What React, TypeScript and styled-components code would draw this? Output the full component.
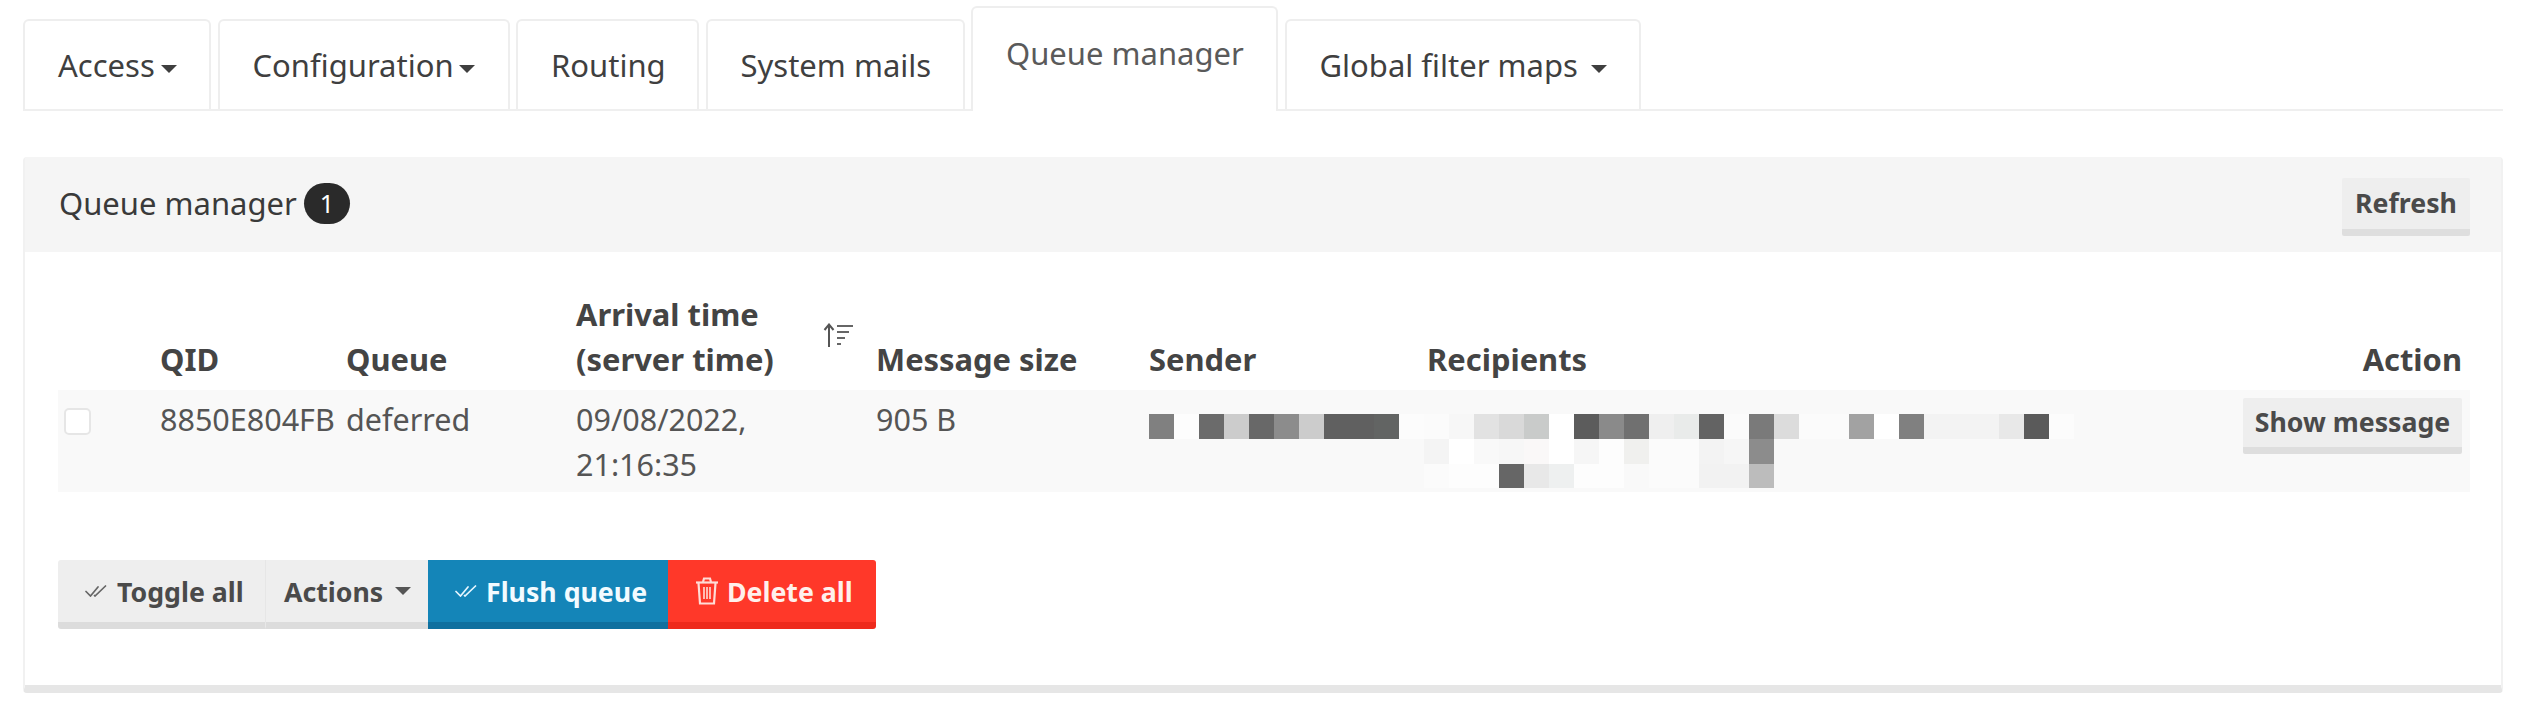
import React from "react";
import styled, { createGlobalStyle } from "styled-components";

const Global = createGlobalStyle`
  html, body { margin: 0; padding: 0; background: #fff; }
  body { font-family: "Noto Sans", "Open Sans", sans-serif; color: #444; }
`;

const Page = styled.div`
  width: 2526px;
  height: 714px;
  box-sizing: border-box;
  padding: 7px 23px 0 23px;
  overflow: hidden;
`;

const TabBar = styled.nav`
  display: flex;
  align-items: flex-end;
  height: 104px;
  border-bottom: 2px solid #efefef;
  box-sizing: border-box;
  margin-bottom: 46px;
`;

const Tab = styled.div<{ $w: number; $active?: boolean }>`
  width: ${(p) => p.$w}px;
  box-sizing: border-box;
  flex: none;
  height: ${(p) => (p.$active ? 105 : 90)}px;
  margin-right: 6.5px;
  margin-bottom: ${(p) => (p.$active ? -2 : 0)}px;
  padding: ${(p) => (p.$active ? "23px 0 0 33px" : "22px 0 0 33px")};
  border: 2px solid #eeeeee;
  border-bottom: 0;
  border-radius: 6px 6px 0 0;
  background: #fff;
  font-size: 31px;
  line-height: 45px;
  white-space: nowrap;
  color: ${(p) => (p.$active ? "#5a5a5a" : "#3f3f3f")};
`;

const Caret = styled.span<{ $gap?: number; $color?: string }>`
  display: inline-block;
  vertical-align: middle;
  margin-left: ${(p) => p.$gap ?? 5}px;
  border-left: 8px solid transparent;
  border-right: 8px solid transparent;
  border-top: 8px solid ${(p) => p.$color ?? "#3f3f3f"};
`;

const Panel = styled.section`
  width: 2480px;
  height: 536px;
  box-sizing: border-box;
  border-left: 2px solid #f1f1f1;
  border-right: 2px solid #f1f1f1;
  border-bottom: 8px solid #e6e6e6;
  border-radius: 4px;
  background: #fff;
`;

const PanelHead = styled.header`
  height: 95px;
  box-sizing: border-box;
  background: #f5f5f5;
  padding: 21px 31px 0 34px;
  display: flex;
  align-items: flex-start;
  justify-content: space-between;
`;

const Title = styled.div`
  display: flex;
  align-items: center;
  height: 50px;
  font-size: 31px;
  color: #3a3a3a;
  white-space: nowrap;
`;

const Badge = styled.span`
  display: inline-flex;
  align-items: center;
  justify-content: center;
  margin-left: 7px;
  width: 46px;
  height: 41px;
  border-radius: 21px;
  background: #2a2a2a;
  color: #fff;
  font-size: 25px;
  font-weight: 400;
`;

const FlatButton = styled.button`
  box-sizing: border-box;
  border: 0;
  border-bottom: 7px solid #dedede;
  border-radius: 2px;
  background: #eeeeee;
  color: #4a4a4a;
  font-family: inherit;
  font-weight: 700;
  font-size: 26.7px;
  line-height: 1;
  padding: 0;
  white-space: nowrap;
`;

const RefreshButton = styled(FlatButton)`
  width: 128px;
  height: 58px;
`;

const ShowButton = styled(FlatButton)`
  width: 219px;
  height: 56px;
`;

const Body = styled.div`
  padding: 40px 31px 0 33px;
`;

const cols = "102px 186px 230px 300px 273px 278px 1fr 240px";

const HeadRow = styled.div`
  display: grid;
  grid-template-columns: ${cols};
  height: 98px;
  align-items: end;
  padding-bottom: 11px;
  box-sizing: border-box;
`;

const HeadCell = styled.div<{ $right?: boolean }>`
  font-size: 30.9px;
  font-weight: 700;
  line-height: 45px;
  color: #444;
  white-space: nowrap;
  text-align: ${(p) => (p.$right ? "right" : "left")};
  padding-right: ${(p) => (p.$right ? "8px" : "0")};
  position: relative;
`;

const SortIcon = styled.svg`
  position: absolute;
  left: 247px;
  top: 31px;
  width: 30px;
  height: 24px;
`;

const DataRow = styled.div`
  display: grid;
  grid-template-columns: ${cols};
  height: 102px;
  background: #f9f9f9;
  align-items: start;
`;

const DataCell = styled.div`
  font-size: 30.5px;
  line-height: 45px;
  padding-top: 7px;
  color: #555;
  white-space: nowrap;
`;

const Check = styled.span`
  display: block;
  box-sizing: border-box;
  width: 27px;
  height: 27px;
  margin: 18px 0 0 6px;
  border: 2px solid #e6e6e6;
  border-radius: 5px;
  background: #fff;
`;

const Redacted = styled.svg`
  grid-column: 6 / span 2;
  display: block;
  margin-top: 24px;
  width: 925px;
  height: 74px;
`;

const ActionCell = styled.div`
  display: flex;
  justify-content: flex-end;
  padding: 8px 8px 0 0;
`;

const ButtonGroup = styled.div`
  display: flex;
  margin-top: 68px;
  height: 69px;
`;

const ActionButton = styled.button<{ $w: number; $bg: string; $edge: string; $fg: string; $pad: number; $divider?: boolean }>`
  width: ${(p) => p.$w}px;
  box-sizing: border-box;
  display: flex;
  align-items: center;
  border: 0;
  border-bottom: 7px solid ${(p) => p.$edge};
  border-right: ${(p) => (p.$divider ? "1px solid #e6e6e6" : "0")};
  background: ${(p) => p.$bg};
  color: ${(p) => p.$fg};
  font-family: inherit;
  font-weight: 700;
  font-size: 26.7px;
  padding: 0 0 0 ${(p) => p.$pad}px;
  white-space: nowrap;
  &:last-child { border-radius: 0 3px 3px 0; }
  &:first-child { border-radius: 3px 0 0 3px; }
`;

const IconSlot = styled.span<{ $w: number }>`
  display: inline-flex;
  width: ${(p) => p.$w}px;
  flex: none;
`;

const DoubleCheck = ({ color }: { color: string }) => (
  <svg width="22" height="12" viewBox="0 0 22 12" fill="none" stroke={color} strokeWidth="1.7" strokeLinecap="round">
    <path d="M1 6.5 L5.5 11 L13 2" />
    <path d="M9.5 10.5 L10 11 L20.5 1" />
  </svg>
);

const TrashIcon = () => (
  <svg width="24" height="28" viewBox="0 0 24 28" fill="none" stroke="#ffdcd6" strokeWidth="2.2">
    <path d="M1 5.5 H23" />
    <path d="M8 5 L9 1.5 H15 L16 5" />
    <path d="M3.5 6 L5 26.5 H19 L20.5 6" />
    <path d="M9 10 V22 M12 10 V22 M15 10 V22" strokeWidth="1.6" />
  </svg>
);

const rows: string[][] = [
  ["#808080","#fdfdfd","#6b6b6b","#cccccc","#686868","#8c8c8c","#cccccc","#606060","#606060","#626463","#fcfcfc","#fbfbfb","#f7f7f7","#e2e2e2","#d9d9d9","#c9cbca","#ffffff","#5c5c5c","#8a8a8a","#707070","#efefef","#e9ebea","#636363","#fbfbfb","#7a7a7a","#dcdcdc","#fbfbfb","#fbfbfb","#a2a2a2","#ffffff","#808080","#f3f3f3","#f3f3f3","#f3f3f3","#e8e8e8","#5a5a5a","#fcfcfc"],
  ["#f9f9f9","#f9f9f9","#f9f9f9","#f9f9f9","#f9f9f9","#f9f9f9","#f9f9f9","#f9f9f9","#f9f9f9","#f9f9f9","#f9f9f9","#f4f4f4","#ffffff","#f9f9f9","#f7f7f7","#faf8f8","#ffffff","#f6f6f6","#fdfdfd","#f0f0ee","#fbfbfb","#fbfbfb","#f3f3f3","#f6f6f6","#8c8c8c","#f9f9f9","#f9f9f9","#f9f9f9","#f9f9f9","#f9f9f9","#f9f9f9","#f9f9f9","#f9f9f9","#f9f9f9","#f9f9f9","#f9f9f9","#f9f9f9"],
  ["#f9f9f9","#f9f9f9","#f9f9f9","#f9f9f9","#f9f9f9","#f9f9f9","#f9f9f9","#f9f9f9","#f9f9f9","#f9f9f9","#f9f9f9","#fbfbfb","#fdfdfd","#fdfdfd","#666666","#e8e8e8","#eef0f0","#fdfdfd","#fdfdfd","#f9f9f9","#fbfbfb","#fbfbfb","#f2f2f2","#f2f2f2","#bcbcbc","#f9f9f9","#f9f9f9","#f9f9f9","#f9f9f9","#f9f9f9","#f9f9f9","#f9f9f9","#f9f9f9","#f9f9f9","#f9f9f9","#f9f9f9","#f9f9f9"],
];

const tabs = [
  { label: "Access", w: 188, caret: 6 },
  { label: "Configuration", w: 292, caret: 5 },
  { label: "Routing", w: 183 },
  { label: "System mails", w: 259 },
  { label: "Queue manager", w: 307, active: true },
  { label: "Global filter maps", w: 356, caret: 13 },
];

export default function App() {
  return (
    <Page>
      <Global />
      <TabBar>
        {tabs.map((t) => (
          <Tab key={t.label} $w={t.w} $active={t.active}>
            {t.label}
            {t.caret !== undefined && <Caret $gap={t.caret} />}
          </Tab>
        ))}
      </TabBar>
      <Panel>
        <PanelHead>
          <Title>
            Queue manager<Badge>1</Badge>
          </Title>
          <RefreshButton>Refresh</RefreshButton>
        </PanelHead>
        <Body>
          <HeadRow>
            <HeadCell />
            <HeadCell>QID</HeadCell>
            <HeadCell>Queue</HeadCell>
            <HeadCell>
              Arrival time
              <br />
              (server time)
              <SortIcon viewBox="0 0 30 24" fill="none" stroke="#555">
                <path d="M6 24 V2 M1.5 7 L6 1.5 L10.5 7" strokeWidth="2" />
                <path d="M14 3 H30" strokeWidth="1.8" />
                <path d="M14 9 H26" strokeWidth="1.8" />
                <path d="M14 15 H22" strokeWidth="1.8" />
                <path d="M14 21 H18" strokeWidth="1.8" />
              </SortIcon>
            </HeadCell>
            <HeadCell>Message size</HeadCell>
            <HeadCell>Sender</HeadCell>
            <HeadCell>Recipients</HeadCell>
            <HeadCell $right>Action</HeadCell>
          </HeadRow>
          <DataRow>
            <div>
              <Check />
            </div>
            <DataCell>8850E804FB</DataCell>
            <DataCell>deferred</DataCell>
            <DataCell>
              09/08/2022,
              <br />
              21:16:35
            </DataCell>
            <DataCell>905 B</DataCell>
            <Redacted viewBox="0 0 925 74" shapeRendering="crispEdges">
              {rows.map((row, y) =>
                row.map((c, x) => <rect key={`${x}-${y}`} x={x * 25} y={y * 25} width={25} height={24.7} fill={c} />)
              )}
            </Redacted>
            <ActionCell>
              <ShowButton>Show message</ShowButton>
            </ActionCell>
          </DataRow>
          <ButtonGroup>
            <ActionButton $w={208} $bg="#eeeeee" $edge="#dcdcdc" $fg="#4a4a4a" $pad={27} $divider>
              <IconSlot $w={32}>
                <DoubleCheck color="#666" />
              </IconSlot>
              Toggle all
            </ActionButton>
            <ActionButton $w={162} $bg="#eeeeee" $edge="#dcdcdc" $fg="#4a4a4a" $pad={18}>
              Actions
              <Caret $gap={12} $color="#555" />
            </ActionButton>
            <ActionButton $w={240} $bg="#1485b8" $edge="#0f709f" $fg="#f2fbff" $pad={27}>
              <IconSlot $w={31}>
                <DoubleCheck color="#e6f6ff" />
              </IconSlot>
              Flush queue
            </ActionButton>
            <ActionButton $w={208} $bg="#ff3829" $edge="#ee2a1c" $fg="#fff0ec" $pad={27}>
              <IconSlot $w={32}>
                <TrashIcon />
              </IconSlot>
              Delete all
            </ActionButton>
          </ButtonGroup>
        </Body>
      </Panel>
    </Page>
  );
}
